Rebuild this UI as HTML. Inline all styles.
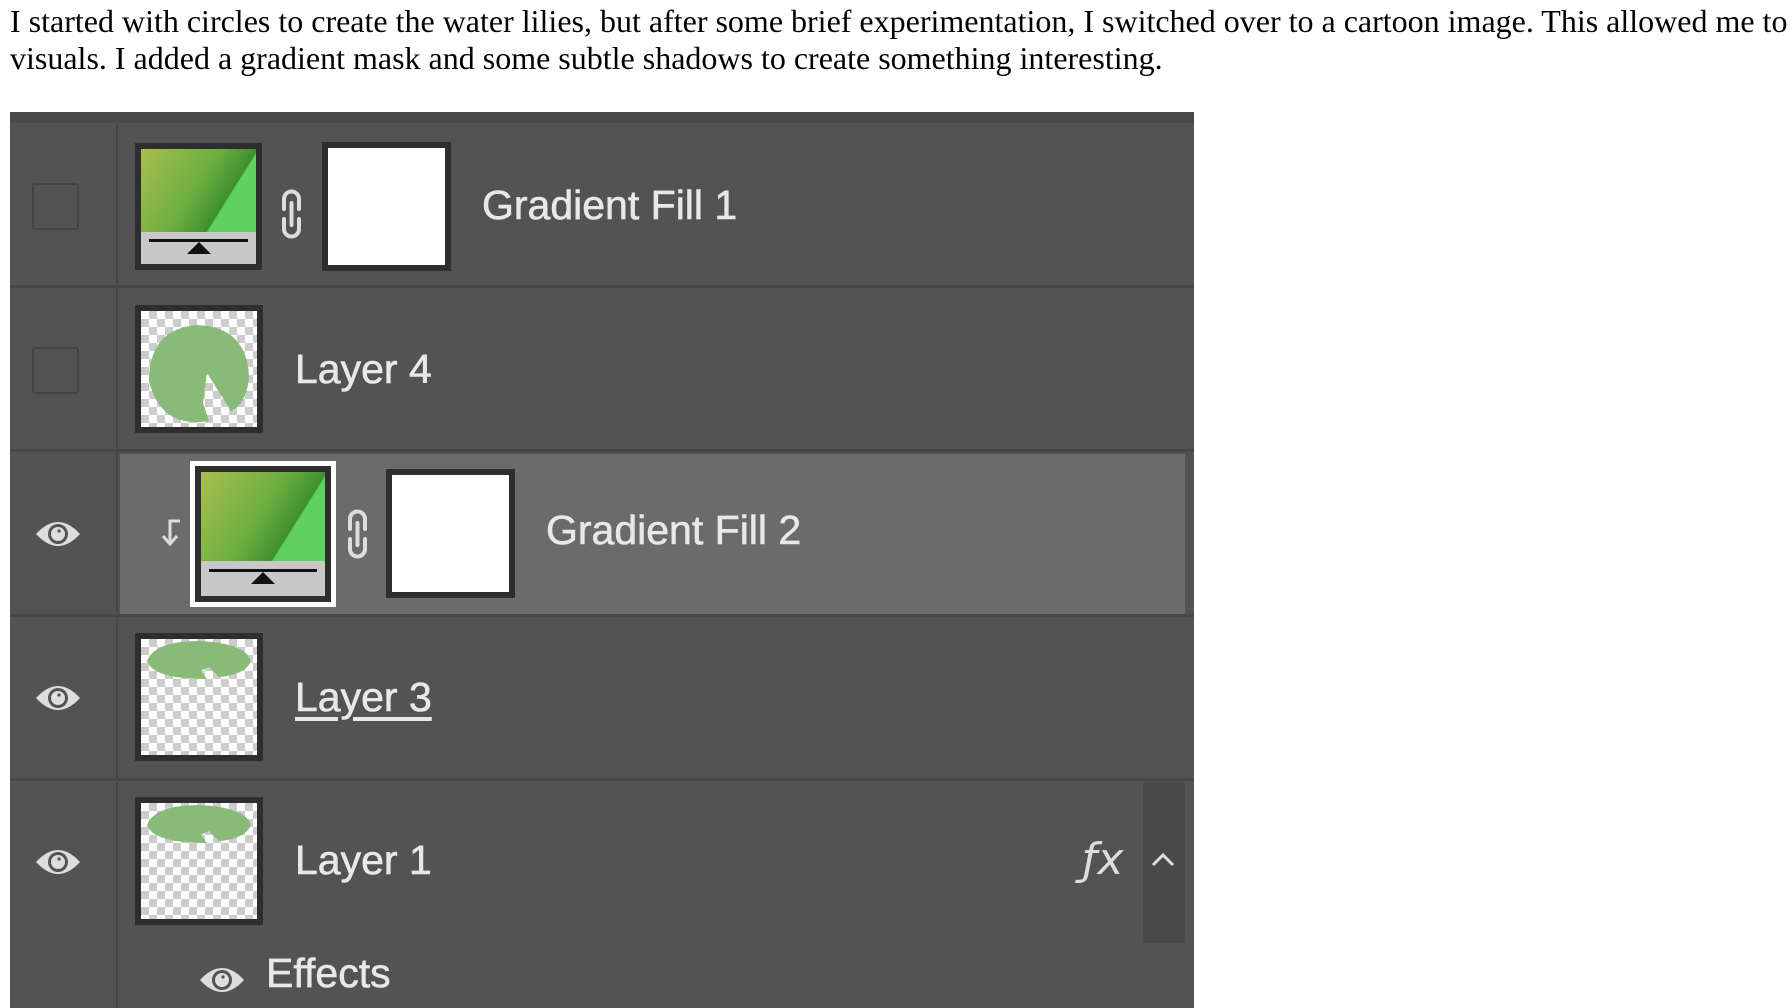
<!DOCTYPE html>
<html><head><meta charset="utf-8"><style>
*{margin:0;padding:0;box-sizing:border-box}
body{width:1792px;height:1008px;background:#fff;position:relative;overflow:hidden;font-family:"Liberation Sans",sans-serif}
.p{position:absolute;left:10px;top:3px;font-family:"Liberation Serif",serif;font-size:32px;line-height:37px;color:#000;white-space:nowrap}
.panel{position:absolute;left:10px;top:112px;width:1184px;height:896px;background:#535353}
.a{position:absolute}
.hl{position:absolute;left:0;width:1184px;height:3px;background:#474747}
.t{position:absolute;color:#e8e8e8;font-size:41px;line-height:1;white-space:nowrap;-webkit-text-stroke:0.6px #e8e8e8}
.thumb{position:absolute;background:#2e2e2e;padding:6px}
.chk{background-color:#fff;background-image:linear-gradient(45deg,#ccc 25%,transparent 25%,transparent 75%,#ccc 75%),linear-gradient(45deg,#ccc 25%,transparent 25%,transparent 75%,#ccc 75%);background-size:16px 16px;background-position:0 0,8px 8px;width:100%;height:100%;position:relative;overflow:hidden}
.grad{width:100%;height:100%;position:relative;background:#c8c8c8}
.g1{position:absolute;left:0;top:0;right:0;height:72%;background:linear-gradient(122deg,#a8bf50 0%,#6cae40 48%,#3e8f30 70%,#5fd160 71%)}
.cb{position:absolute;width:47px;height:47px;border:2px solid #444;border-radius:3px}
</style></head><body>
<div class="p">I started with circles to create the water lilies, but after some brief experimentation, I switched over to a cartoon image. This allowed me to<br>visuals. I added a gradient mask and some subtle shadows to create something interesting.</div>
<div class="panel">
<div class="a" style="left:0;top:0;width:1184px;height:11px;background:#4a4a4a"></div>
<div class="a" style="left:106px;top:11px;width:2px;height:885px;background:#474747"></div>
<div class="hl" style="top:173px"></div>
<div class="hl" style="top:337px"></div>
<div class="hl" style="top:502px"></div>
<div class="hl" style="top:666px"></div>
<!-- row1 -->
<div class="cb" style="left:22px;top:71px"></div>
<div class="thumb" style="left:125px;top:31px;width:127px;height:127px"><div class="grad"><div class="g1"></div><div class="a" style="left:8px;right:8px;top:78%;height:3px;background:#111"></div><div class="a" style="left:50%;margin-left:-12px;top:81%;border-left:12px solid transparent;border-right:12px solid transparent;border-bottom:12px solid #111"></div></div></div>
<svg class="a" style="left:264px;top:73px" width="35" height="58" viewBox="0 0 35 58"><path d="M10 24 V14 a7.5 7.5 0 0 1 15 0 V24 M10 34 V44 a7.5 7.5 0 0 0 15 0 V34 M17.5 18 V40" fill="none" stroke="#ddd" stroke-width="4" stroke-linecap="round"/></svg>
<div class="thumb" style="left:312px;top:30px;width:129px;height:129px"><div style="background:#fff;width:100%;height:100%"></div></div>
<div class="t" style="left:472px;top:73px">Gradient Fill 1</div>
<!-- row2 -->
<div class="cb" style="left:22px;top:235px"></div>
<div class="thumb" style="left:125px;top:193px;width:128px;height:128px"><div class="chk"><svg class="a" style="left:0;top:0" width="116" height="116" viewBox="0 0 116 116"><path d="M62 92 L68 110 Q20 118 8 70 Q8 18 56 14 Q106 16 108 66 Q106 92 90 100 L66 62 Z" fill="#88bb77"/></svg></div></div>
<div class="t" style="left:285px;top:237px">Layer 4</div>
<!-- row3 -->
<div class="a" style="left:110px;top:342px;width:1065px;height:160px;background:#6b6b6b"></div>
<svg class="a" style="left:24px;top:404px" width="48" height="36" viewBox="0 0 48 36"><path d="M2 18 Q24 -6 46 18 Q24 42 2 18Z" fill="#ddd"/><circle cx="24" cy="18" r="10" fill="#535353"/><circle cx="24" cy="18" r="7" fill="#ddd"/><circle cx="25" cy="15" r="1.6" fill="#535353"/></svg>
<svg class="a" style="left:148px;top:405px" width="26" height="30" viewBox="0 0 26 30"><path d="M22 4 H12 V26 M5 19 L12 27 L19 19" fill="none" stroke="#ddd" stroke-width="3"/></svg>
<div class="a" style="left:180px;top:349px;width:146px;height:146px;background:#fff;padding:5px"><div class="thumb" style="position:relative;width:136px;height:136px"><div class="grad"><div class="g1"></div><div class="a" style="left:8px;right:8px;top:78%;height:3px;background:#111"></div><div class="a" style="left:50%;margin-left:-12px;top:81%;border-left:12px solid transparent;border-right:12px solid transparent;border-bottom:12px solid #111"></div></div></div></div>
<svg class="a" style="left:330px;top:393px" width="35" height="58" viewBox="0 0 35 58"><path d="M10 24 V14 a7.5 7.5 0 0 1 15 0 V24 M10 34 V44 a7.5 7.5 0 0 0 15 0 V34 M17.5 18 V40" fill="none" stroke="#ddd" stroke-width="4" stroke-linecap="round"/></svg>
<div class="thumb" style="left:376px;top:357px;width:129px;height:129px"><div style="background:#fff;width:100%;height:100%"></div></div>
<div class="t" style="left:536px;top:398px">Gradient Fill 2</div>
<!-- row4 -->
<svg class="a" style="left:24px;top:568px" width="48" height="36" viewBox="0 0 48 36"><path d="M2 18 Q24 -6 46 18 Q24 42 2 18Z" fill="#ddd"/><circle cx="24" cy="18" r="10" fill="#535353"/><circle cx="24" cy="18" r="7" fill="#ddd"/><circle cx="25" cy="15" r="1.6" fill="#535353"/></svg>
<div class="thumb" style="left:125px;top:521px;width:128px;height:128px"><div class="chk"><svg class="a" style="left:0;top:0" width="116" height="116" viewBox="0 0 116 116"><path d="M60 32 L66 40 Q12 40 6 22 Q14 2 58 2 Q104 4 110 22 Q104 36 78 38 L68 28 Z" fill="#88bb77"/></svg></div></div>
<div class="t" style="left:285px;top:565px;text-decoration:underline;text-underline-offset:6px">Layer 3</div>
<!-- row5 -->
<div class="a" style="left:1133px;top:670px;width:42px;height:161px;background:#494949"></div>
<svg class="a" style="left:24px;top:732px" width="48" height="36" viewBox="0 0 48 36"><path d="M2 18 Q24 -6 46 18 Q24 42 2 18Z" fill="#ddd"/><circle cx="24" cy="18" r="10" fill="#535353"/><circle cx="24" cy="18" r="7" fill="#ddd"/><circle cx="25" cy="15" r="1.6" fill="#535353"/></svg>
<div class="thumb" style="left:125px;top:685px;width:128px;height:128px"><div class="chk"><svg class="a" style="left:0;top:0" width="116" height="116" viewBox="0 0 116 116"><path d="M60 32 L66 40 Q12 40 6 22 Q14 2 58 2 Q104 4 110 22 Q104 36 78 38 L68 28 Z" fill="#88bb77"/></svg></div></div>
<div class="t" style="left:285px;top:728px">Layer 1</div>
<div class="t" style="left:1072px;top:726px;font-family:'DejaVu Sans',sans-serif;font-style:italic;font-size:44px;color:#ddd;-webkit-text-stroke:0">ƒx</div>
<svg class="a" style="left:1140px;top:738px" width="26" height="18" viewBox="0 0 26 18"><path d="M3 15 L13 5 L23 15" fill="none" stroke="#ddd" stroke-width="3"/></svg>
<svg class="a" style="left:188px;top:850px" width="48" height="36" viewBox="0 0 48 36"><path d="M2 18 Q24 -6 46 18 Q24 42 2 18Z" fill="#ddd"/><circle cx="24" cy="18" r="10" fill="#535353"/><circle cx="24" cy="18" r="7" fill="#ddd"/><circle cx="25" cy="15" r="1.6" fill="#535353"/></svg>
<div class="t" style="left:256px;top:841px">Effects</div>
</div>
</body></html>
